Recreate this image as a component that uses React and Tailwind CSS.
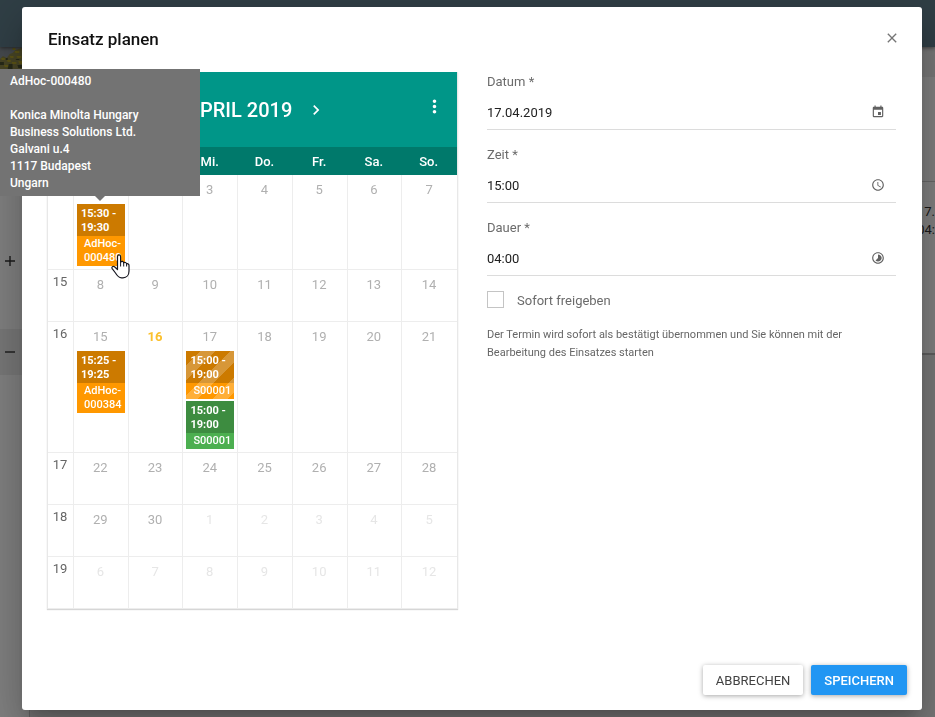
import React from 'react';
import { MdAccessTime, MdChevronLeft, MdChevronRight, MdClose, MdEvent, MdMoreVert, MdTimelapse } from 'react-icons/md';

const DAYS = ['Mo.', 'Di.', 'Mi.', 'Do.', 'Fr.', 'Sa.', 'So.'];

const WEEKS = [
  { week: 14, days: [1, 2, 3, 4, 5, 6, 7] },
  { week: 15, days: [8, 9, 10, 11, 12, 13, 14] },
  { week: 16, days: [15, 16, 17, 18, 19, 20, 21] },
  { week: 17, days: [22, 23, 24, 25, 26, 27, 28] },
  { week: 18, days: [29, 30, 1, 2, 3, 4, 5], nextFrom: 2 },
  { week: 19, days: [6, 7, 8, 9, 10, 11, 12], nextFrom: 0 },
];

const EVENTS = {
  '14-1': [{ time: '15:30 - 19:30', name: 'AdHoc-000480', tone: 'orange', hovered: true }],
  '16-15': [{ time: '15:25 - 19:25', name: 'AdHoc-000384', tone: 'orange' }],
  '16-17': [
    { time: '15:00 - 19:00', name: 'S00001', tone: 'orange', striped: true },
    { time: '15:00 - 19:00', name: 'S00001', tone: 'green' },
  ],
};

const TONES = {
  orange: { time: 'bg-[#cc7a00]', name: 'bg-[#ff9800]' },
  green: { time: 'bg-[#3d8c40]', name: 'bg-[#4caf50]' },
};

function HandCursor() {
  return (
    <svg className="pointer-events-none absolute top-[50px] left-[34px] z-10" width="19" height="25" viewBox="0 0 19 25" aria-hidden="true">
      <path
        d="M6.5 15.5V2.8C6.5 0.3 9.6 0.3 9.6 2.8V8C10.8 6.9 12.5 7.3 12.7 8.8C13.8 8 15.4 8.4 15.6 9.9C16.8 9.3 18 10 18 11.5V17C18 21 15.5 23.8 12 23.8H10.5C7.5 23.8 6 21.5 4.5 19L1.2 14.6C0.3 13 2 11.6 3.5 12.7Z"
        fill="#fff"
        stroke="#15151f"
        strokeWidth="1.2"
        strokeLinejoin="round"
      />
      <path d="M9.6 8V12.5M12.7 8.8V12.5M15.6 9.9V12.5" stroke="#15151f" strokeWidth="1" fill="none" />
    </svg>
  );
}

function EventTooltip() {
  return (
    <div
      role="tooltip"
      className="absolute bottom-full left-[-77px] z-20 mb-2 w-[200px] bg-[#737373] px-[10px] py-1 text-left text-xs leading-[17px] font-medium text-white"
    >
      <p>AdHoc-000480</p>
      <address className="mt-[17px] not-italic">
        Konica Minolta Hungary
        <br />
        Business Solutions Ltd.
        <br />
        Galvani u.4
        <br />
        1117 Budapest
        <br />
        Ungarn
      </address>
      <span className="absolute top-full left-[95px] border-x-[5px] border-t-[5px] border-x-transparent border-t-[#737373]" />
    </div>
  );
}

function CalendarEvent({ event }) {
  const tone = TONES[event.tone];
  return (
    <div className="relative text-left text-[11px] leading-[14px] text-white">
      <div className={`pt-[3px] pr-1 pb-px pl-1 font-bold ${tone.time}`}>{event.time}</div>
      <div className={`pt-px pb-px pl-[7px] font-medium ${tone.name}`}>{event.name}</div>
      {event.striped && (
        <div className="absolute inset-0 bg-[linear-gradient(135deg,transparent_25%,rgba(255,255,255,0.22)_25%,rgba(255,255,255,0.22)_50%,transparent_50%,transparent_75%,rgba(255,255,255,0.22)_75%)] bg-[size:30px_30px]" />
      )}
      {event.hovered && (
        <>
          <EventTooltip />
          <HandCursor />
        </>
      )}
    </div>
  );
}

function DayCell({ week, day, next }) {
  const events = EVENTS[`${week}-${day}`] || [];
  const today = week === 16 && day === 16;
  const color = today ? 'font-bold text-[#fbc02d]' : next ? 'text-[#e6e6e6]' : 'text-[#b0b0b0]';
  return (
    <td className="h-[52px] border-r border-b border-[#ededed] px-[3px] pb-[3px] align-top last:border-r-0">
      <div className={`h-[29px] pt-[5px] pr-px text-center text-[13px] leading-5 ${color}`}>{day}</div>
      <div className="flex flex-col gap-[2px]">
        {events.map((event, i) => (
          <CalendarEvent key={i} event={event} />
        ))}
      </div>
    </td>
  );
}

function Calendar() {
  return (
    <section aria-label="Kalender" className="border-x border-[#e8e8e8] shadow-[0_1px_1px_rgba(0,0,0,0.16)]">
      <div className="flex h-[75px] items-center bg-[#009688] text-white">
        <div className="flex flex-1 items-center justify-center gap-[14px] pt-px pl-[7px]">
          <button type="button" aria-label="Vorheriger Monat">
            <MdChevronLeft size={20} />
          </button>
          <h2 className="text-xl leading-6 font-medium">APRIL 2019</h2>
          <button type="button" aria-label="Nächster Monat">
            <MdChevronRight size={20} />
          </button>
        </div>
        <button type="button" aria-label="Menü" className="mr-3 mb-[6px]">
          <MdMoreVert size={21} />
        </button>
      </div>
      <table className="w-full table-fixed border-separate border-spacing-0">
        <thead className="bg-[#00796b] text-[13px] text-white">
          <tr>
            <th className="h-7 w-[26px] p-0" aria-label="Woche" />
            {DAYS.map((d) => (
              <th key={d} scope="col" className="h-7 p-0 pt-[2px] pr-[2px] text-center font-medium">
                {d}
              </th>
            ))}
          </tr>
        </thead>
        <tbody>
          {WEEKS.map((row) => (
            <tr key={row.week}>
              <th scope="row" className="border-r border-b border-[#ededed] p-0 pt-[2px] pr-px align-top text-[13px] leading-5 font-normal text-[#666]">
                {row.week}
              </th>
              {row.days.map((day, i) => (
                <DayCell key={i} week={row.week} day={day} next={row.nextFrom !== undefined && i >= row.nextFrom} />
              ))}
            </tr>
          ))}
        </tbody>
      </table>
    </section>
  );
}

function Field({ id, label, value, icon: Icon }) {
  return (
    <div className="mb-[15px]">
      <label htmlFor={id} className="block h-[18px] pt-px text-[13px] leading-[18px] text-[#6b6b6b]">
        {label} *
      </label>
      <div className="flex h-10 items-center border-b border-[#dcdcdc] pt-[5px] pr-[11px]">
        <input id={id} defaultValue={value} className="min-w-0 flex-1 bg-transparent pt-[2px] text-[13px] leading-5 text-[#212121] outline-none" />
        <button type="button" aria-label={`${label} wählen`} className="text-[#616161]">
          <Icon size={14} />
        </button>
      </div>
    </div>
  );
}

function PageBehind() {
  return (
    <div className="flex min-h-screen flex-col bg-[#eee]" aria-hidden="true">
      <div className="z-10 h-[47px] bg-[#607d8b] shadow-[0_1px_4px_rgba(0,0,0,0.5)]" />
      <div className="flex flex-1 justify-between">
        <div className="flex w-[30px] flex-col border-r border-[#ccc] bg-white">
          <svg className="h-[22px] w-full" viewBox="0 0 30 22" preserveAspectRatio="none">
            <rect width="30" height="22" fill="#8a929a" />
            <path d="M0 12L3 9L7 11L10 7L13 6L16 3L19 2L23 1L30 3V22H0Z" fill="#8f8a4a" />
            <path d="M1 11H5V13H2ZM7 13H11V15H8ZM10 9H14V11H11ZM15 4H20V6H16ZM17 9H22V11H18ZM12 15H17V17H13ZM19 14H23V17H20ZM4 18H9V20H5ZM13 1H16V3H13Z" fill="#b8a82a" />
            <path d="M0 15H4V18H0ZM9 17H13V22H8ZM16 12H20V13H17ZM18 18H23V21H19ZM6 11H8V13H6Z" fill="#4c512f" />
          </svg>
          <div className="flex h-[260px] items-end px-[4px] pb-[62px]">
            <svg width="12" height="12" viewBox="0 0 12 12">
              <path d="M6 1V11M1 6H11" stroke="#333" strokeWidth="1.4" />
            </svg>
          </div>
          <div className="flex h-[46px] items-center bg-[#eee] px-[4px]">
            <svg width="12" height="12" viewBox="0 0 12 12">
              <path d="M1 6H11" stroke="#333" strokeWidth="1.4" />
            </svg>
          </div>
        </div>
        <div className="w-[20px] overflow-hidden">
          <div className="h-[30px]" />
          <div className="h-[63px] bg-white" />
          <div className="h-[42px] border-b border-[#ccc] bg-[#fafafa]" />
          <div className="flex h-[173px] flex-col items-end border-b-2 border-[#bbb] bg-white pt-[21px] text-[13px] leading-[18px] text-[#333]">
            <span>17.</span>
            <span>04:</span>
          </div>
        </div>
      </div>
    </div>
  );
}

export default function App() {
  return (
    <div className="font-[Roboto,sans-serif]">
      <PageBehind />
      <div className="fixed inset-0 z-20 flex bg-black/50 py-[7px] pr-[13px] pl-[22px]">
        <div
          role="dialog"
          aria-modal="true"
          aria-labelledby="dialog-title"
          className="flex flex-1 flex-col rounded-[3px] bg-white shadow-[0_11px_15px_-7px_rgba(0,0,0,0.2),0_24px_38px_3px_rgba(0,0,0,0.14),0_9px_46px_8px_rgba(0,0,0,0.12)]"
        >
          <header className="flex items-start justify-between px-[26px] pt-5 pb-[21px]">
            <h1 id="dialog-title" className="text-[17px] leading-6 font-medium text-[#111]">
              Einsatz planen
            </h1>
            <button type="button" aria-label="Schließen" className="-mr-1 pt-[3px] text-[#757575]">
              <MdClose size={16} />
            </button>
          </header>
          <main className="grid flex-1 grid-cols-2 items-start gap-7 px-[25px]">
            <Calendar />
            <form className="px-px">
              <Field id="datum" label="Datum" value="17.04.2019" icon={MdEvent} />
              <Field id="zeit" label="Zeit" value="15:00" icon={MdAccessTime} />
              <Field id="dauer" label="Dauer" value="04:00" icon={MdTimelapse} />
              <div className="flex items-center gap-[13px]">
                <input id="sofort" type="checkbox" className="size-[17px] appearance-none border border-[#c4c4c4]" />
                <label htmlFor="sofort" className="h-[17px] pt-px text-[13px] leading-[17px] text-[#6b6b6b]">
                  Sofort freigeben
                </label>
              </div>
              <p className="mt-[18px] pr-6 text-[11px] leading-[18px] text-[#666]">
                Der Termin wird sofort als bestätigt übernommen und Sie können mit der Bearbeitung des Einsatzes starten
              </p>
            </form>
          </main>
          <footer className="flex justify-end gap-2 p-[15px]">
            <button type="button" className="h-[30px] rounded-[2px] bg-white px-[13px] pt-[2px] text-[13px] text-[#424242] shadow-[0_1px_5px_rgba(0,0,0,0.35)]">
              ABBRECHEN
            </button>
            <button type="button" className="h-[30px] rounded-[2px] bg-[#2196f3] px-[13px] pt-[2px] text-[13px] font-medium text-white shadow-[0_1px_5px_rgba(0,0,0,0.35)]">
              SPEICHERN
            </button>
          </footer>
        </div>
      </div>
    </div>
  );
}
